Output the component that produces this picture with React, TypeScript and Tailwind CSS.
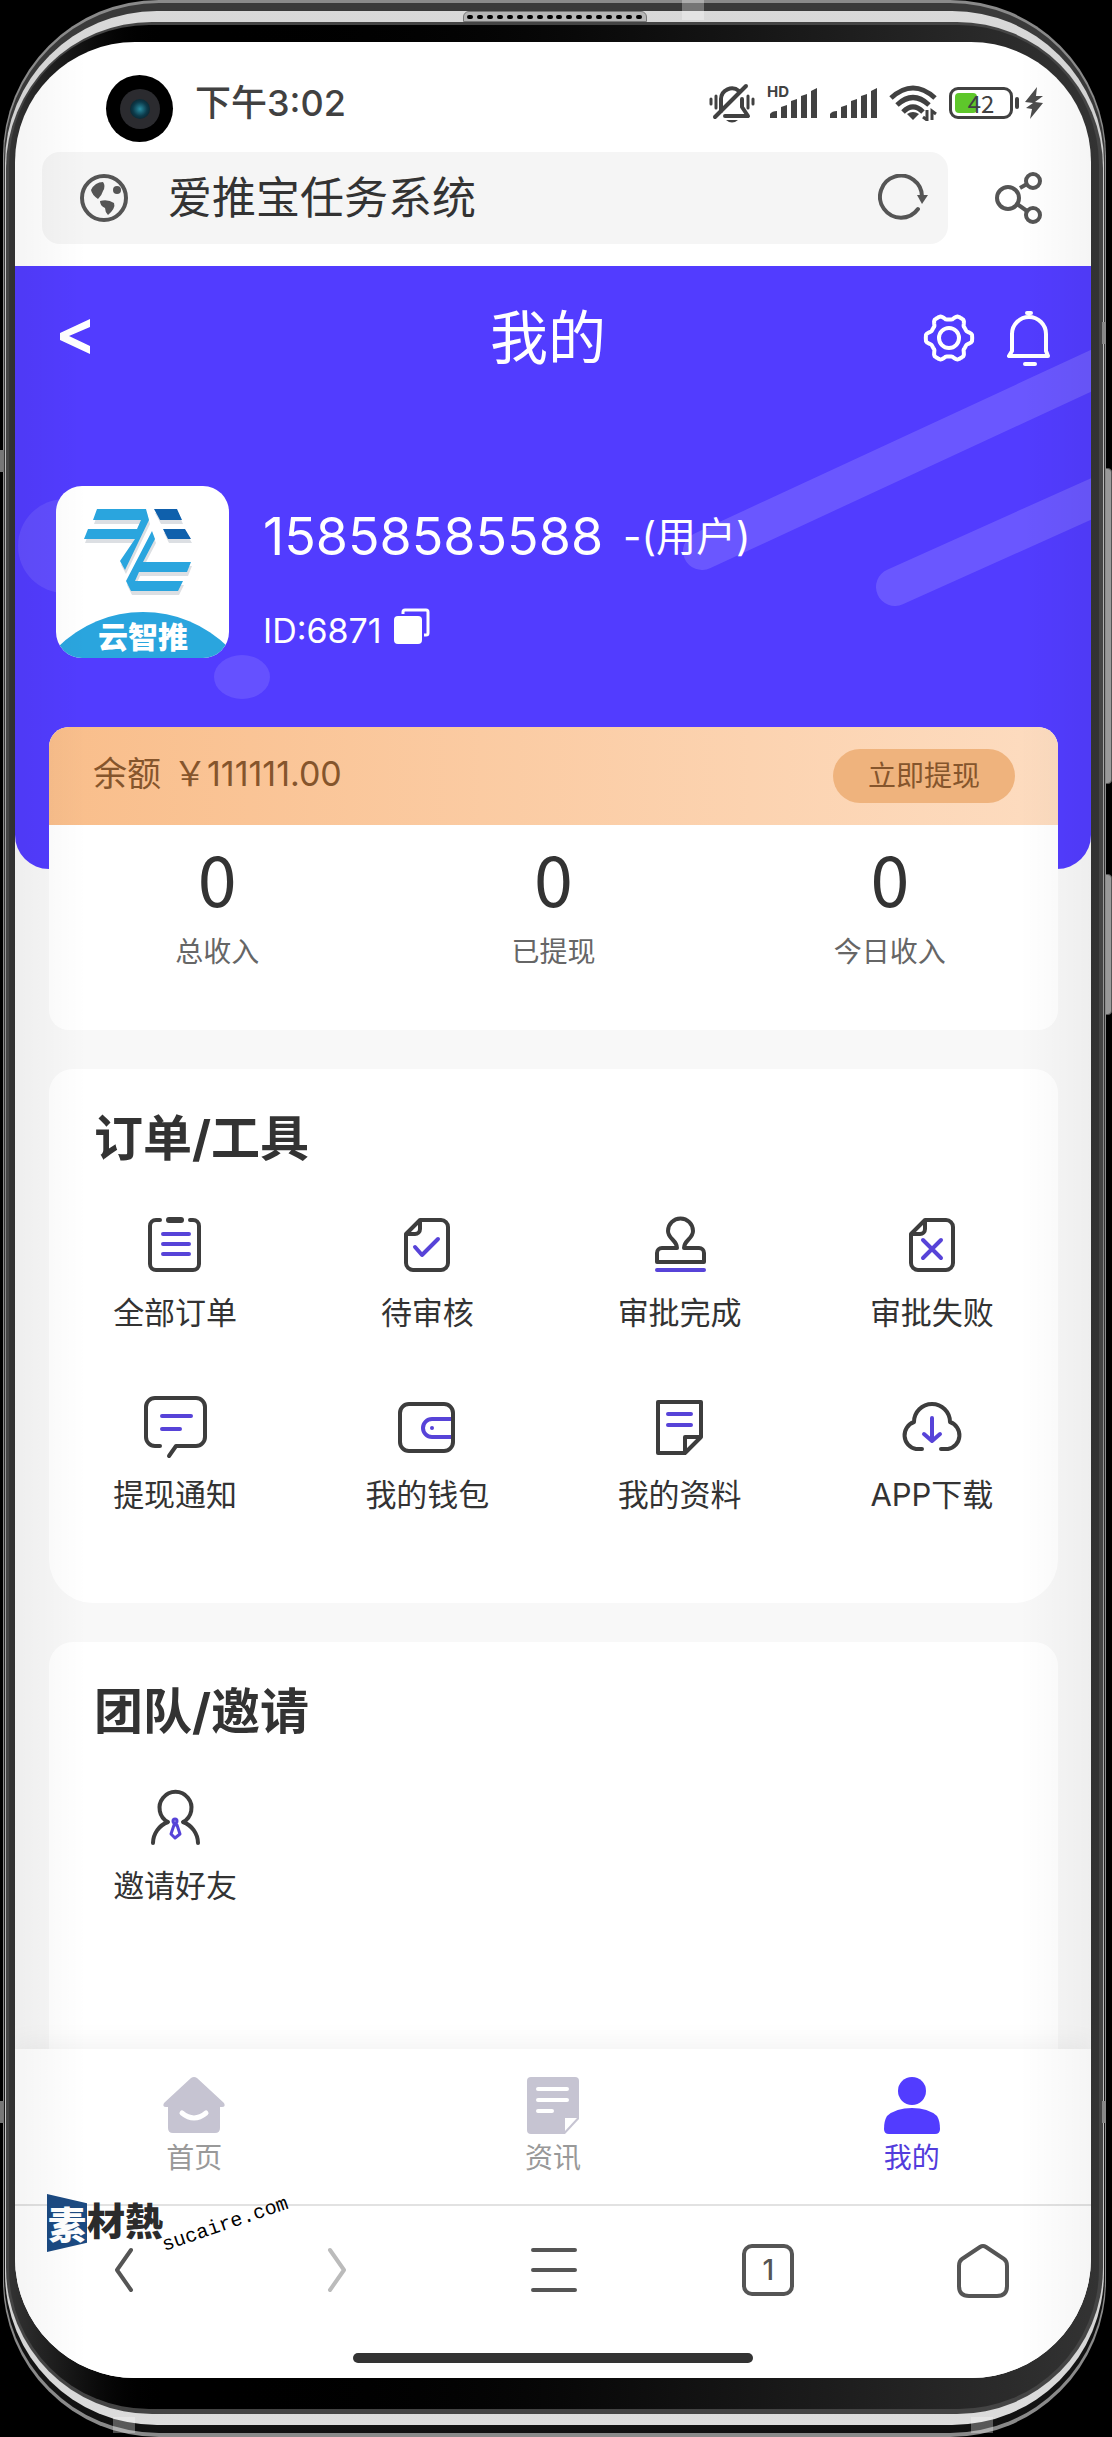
import type { ReactNode } from 'react';

const INK = '#3d3d3d';
const ACCENT = '#5743d8';

function ToolIcon({ children }: { children: ReactNode }) {
  return (
    <svg
      viewBox="0 0 64 64"
      className="h-16 w-16 overflow-visible"
      fill="none"
      stroke={INK}
      strokeWidth="4"
      strokeLinecap="round"
      strokeLinejoin="round"
      aria-hidden
    >
      {children}
    </svg>
  );
}

const FilePath = () => (
  <path d="M25 6H46a7 7 0 0 1 7 7V49a7 7 0 0 1-7 7H18a7 7 0 0 1-7-7V20L25 6V15a5 5 0 0 1-5 5H11" />
);

const ORDER_TOOLS = [
  {
    label: '全部订单',
    icon: (
      <ToolIcon>
        <path d="M17 6H13a6 6 0 0 0-6 6V50a6 6 0 0 0 6 6H50a6 6 0 0 0 6-6V12a6 6 0 0 0-6-6H47" />
        <rect x="23" y="3" width="18" height="6" rx="3" fill={INK} stroke="none" />
        <path stroke={ACCENT} d="M20 20H46M20 30H46M20 40H46" />
      </ToolIcon>
    ),
  },
  {
    label: '待审核',
    icon: (
      <ToolIcon>
        <FilePath />
        <path stroke={ACCENT} d="M20 33L27 41L43 25" />
      </ToolIcon>
    ),
  },
  {
    label: '审批完成',
    icon: (
      <ToolIcon>
        <path d="M29 34C29 26 20 25 20 17a12 12 0 0 1 25 0C45 25 36 26 36 34H51a5 5 0 0 1 5 5V48H9V39a5 5 0 0 1 5-5Z" />
        <path stroke={ACCENT} d="M9 56H56" />
      </ToolIcon>
    ),
  },
  {
    label: '审批失败',
    icon: (
      <ToolIcon>
        <FilePath />
        <path stroke={ACCENT} d="M23 26L41 44M41 26L23 44" />
      </ToolIcon>
    ),
  },
  {
    label: '提现通知',
    icon: (
      <ToolIcon>
        <path d="M17 50H12a9 9 0 0 1-9-9V11a9 9 0 0 1 9-9H53a9 9 0 0 1 9 9V41a9 9 0 0 1-9 9H33L26 60" />
        <path stroke={ACCENT} d="M19 20H48M19 33H37" />
      </ToolIcon>
    ),
  },
  {
    label: '我的钱包',
    icon: (
      <ToolIcon>
        <path stroke={ACCENT} d="M57 23H37a9 9 0 0 0 0 18H57" />
        <circle cx="37" cy="32" r="2" fill={ACCENT} stroke="none" />
        <rect x="5" y="8" width="53" height="47" rx="9" />
      </ToolIcon>
    ),
  },
  {
    label: '我的资料',
    icon: (
      <ToolIcon>
        <path d="M10 6H53V41L37 57H10ZM37 57V41H53" />
        <path stroke={ACCENT} d="M20 18H43M20 29H43" />
      </ToolIcon>
    ),
  },
  {
    label: 'APP下载',
    icon: (
      <ToolIcon>
        <path d="M22 53H16a14 14 0 0 1-2-27a18 18 0 0 1 36 0a14 14 0 0 1-2 27H41" />
        <path stroke={ACCENT} d="M32 22V45M24 38L32 45L40 38" />
      </ToolIcon>
    ),
  },
];

const TEAM_TOOLS = [
  {
    label: '邀请好友',
    icon: (
      <ToolIcon>
        <path d="M10 56a23 23 0 0 1 15-21a16 16 0 1 1 15 0a23 23 0 0 1 15 21" />
        <g stroke={ACCENT} strokeWidth="3">
          <circle cx="32" cy="34" r="2" />
          <path d="M31 38L28 47L32 51L37 47L34 38Z" />
        </g>
      </ToolIcon>
    ),
  },
];

const STATS = [
  { label: '总收入', value: 0 },
  { label: '已提现', value: 0 },
  { label: '今日收入', value: 0 },
];

const TABS = [
  {
    label: '首页',
    active: false,
    icon: (
      <>
        <path
          fill="#c6c4d2"
          d="M27 3Q30 1 33 3L60 28Q62 32 58 32H56V53Q56 58 51 58H9Q4 58 4 53V32H2Q-2 32 0 28Z"
        />
        <path d="M18 38Q30 48 42 38" fill="none" stroke="#fff" strokeWidth="5" strokeLinecap="round" />
      </>
    ),
  },
  {
    label: '资讯',
    active: false,
    icon: (
      <>
        <path fill="#c6c4d2" d="M8 2H52Q56 2 56 6V44L42 59H8Q4 59 4 55V6Q4 2 8 2Z" />
        <path d="M15 14H44M15 25H44M15 36H29" stroke="#fff" strokeWidth="4" strokeLinecap="round" />
        <path fill="#fff" d="M42 56V43H54Z" />
      </>
    ),
  },
  {
    label: '我的',
    active: true,
    icon: (
      <g fill="#523cff">
        <circle cx="30" cy="16" r="14" />
        <path d="M30 33Q46 33 55 41Q58 46 58 54Q58 59 53 59H7Q2 59 2 54Q2 46 5 41Q14 33 30 33Z" />
      </g>
    ),
  },
];

// Six-lobed outline for the settings gear
const gearPath =
  Array.from({ length: 90 }, (_, i) => {
    const a = (i * 4 * Math.PI) / 180;
    const r = 21 + Math.max(-2.4, Math.min(2.2, 4 * Math.cos(6 * a)));
    return `${i ? 'L' : 'M'}${(26 + r * Math.cos(a)).toFixed(1)} ${(26 + r * Math.sin(a)).toFixed(1)}`;
  }).join('') + 'Z';

function SignalBars() {
  return (
    <g fill="#414141">
      <path d="M0 30V26Q2 23 7 23V30Z" />
      <path d="M11 30V19L17 17V30Z" />
      <path d="M21 30V13L27 11V30Z" />
      <path d="M31 30V8L37 6V30Z" />
      <path d="M41 30V3L47 0V30Z" />
    </g>
  );
}

function StatusBar() {
  return (
    <div className="flex h-[110px] items-center justify-between pt-3 pr-12 pl-[180px] text-[#414141]">
      <span className="text-[36px] font-medium leading-10">下午3:02</span>
      <div className="flex items-center gap-3">
        <svg viewBox="0 0 46 40" className="h-10 w-[46px]" fill="none" stroke="#414141" strokeWidth="4" strokeLinecap="round">
          <path d="M12 28V16a11 11 0 0 1 18-8M33 16V24L39 33H16" strokeLinejoin="round" />
          <path d="M37 3L6 34" />
          <path d="M17 37Q23 42 29 37Z" fill="#414141" stroke="none" />
          <path strokeWidth="3" d="M2 16V21M7 13V25M39 13V25M44 16V21" />
        </svg>
        <svg viewBox="0 0 51 32" className="h-8 w-[51px] overflow-visible">
          <text x="0" y="10" fontSize="15" fontWeight="700" fill="#414141">HD</text>
          <g transform="translate(3 1)"><SignalBars /></g>
        </svg>
        <svg viewBox="0 0 47 32" className="h-8 w-[47px]">
          <g transform="translate(0 1)"><SignalBars /></g>
        </svg>
        <svg viewBox="0 0 48 36" className="h-9 w-12" fill="none" stroke="#414141" strokeWidth="5">
          <path d="M2 13Q24 -7 46 13" />
          <path d="M8 20Q24 5 40 20" />
          <path d="M14 27Q24 17 34 27" />
          <path d="M24 35L18 29Q24 25 30 29Z" fill="#414141" stroke="none" />
          <path strokeWidth="3" d="M38 25V35L34 32M43 35V26L47 29" />
        </svg>
        <div className="flex items-center gap-[2px]">
          <div className="relative h-8 w-16 rounded-[9px] border-[3px] border-[#414141]">
            <div className="absolute inset-y-[3px] left-[3px] w-[22px] rounded-[4px] bg-[#5ec72b]" />
            <span className="absolute inset-0 text-center font-['Noto_Sans_CJK_SC'] text-[24px] leading-[26px]">42</span>
          </div>
          <div className="h-3 w-1 rounded-full bg-[#414141]" />
          <svg viewBox="0 0 18 32" className="ml-1 h-8 w-[18px]">
            <path fill="#4c4c4c" d="M12 0L0 15L8 16L1 21L7 22L5 32L18 16L10 15L18 9L11 9Z" />
          </svg>
        </div>
      </div>
    </div>
  );
}

function AddressBar() {
  return (
    <div className="flex items-center gap-[47px] pr-12 pb-[22px] pl-[27px]">
      <div className="flex h-[92px] flex-1 items-center rounded-[18px] bg-[#f5f5f5] pr-5 pl-[38px]">
        <svg viewBox="0 0 48 48" className="h-12 w-12">
          <circle cx="24" cy="24" r="22" fill="none" stroke="#555" strokeWidth="4" />
          <path
            fill="#555"
            d="M11 16Q15 8 23 8Q26 12 23 17Q22 21 18 25Q12 21 11 16ZM20 27Q28 25 34 29Q36 34 28 41Q25 38 25 34Q20 32 20 27Z"
          />
          <circle cx="37" cy="16" r="4" fill="#555" />
        </svg>
        <span className="ml-10 flex-1 text-[44px] leading-[56px] text-[#333]">爱推宝任务系统</span>
        <button type="button" aria-label="刷新">
          <svg viewBox="0 0 50 48" className="h-12 w-[50px]">
            <path d="M40 35A21 21 0 1 1 44 23" fill="none" stroke="#555" strokeWidth="4" strokeLinecap="round" />
            <path d="M39 21H50L44 30Z" fill="#555" />
          </svg>
        </button>
      </div>
      <button type="button" aria-label="分享">
        <svg viewBox="0 0 48 52" className="h-[52px] w-12" fill="none" stroke="#555" strokeWidth="4">
          <circle cx="13" cy="26" r="11" />
          <circle cx="38" cy="9" r="7" />
          <circle cx="38" cy="43" r="7" />
          <path d="M25 16L32 12M22 32L32 39" />
        </svg>
      </button>
    </div>
  );
}

function Avatar() {
  return (
    <svg viewBox="0 0 173 172" className="h-[172px] w-[173px] rounded-[26px] bg-white" role="img" aria-label="云智推">
      <g fill="#dcdfe3" transform="translate(1 4)">
        <path d="M41 23H90L93 34L69 84L64 75L79 53H28L32 43H81L85 34H37Z" />
        <path d="M96 45L99 53L87 76H135L131 86H83L79 95H127L122 105H75L70 95Z" />
        <path d="M98 23H121L126 34H104ZM107 43H129L135 53H112Z" />
      </g>
      <g fill="#2aa5de">
        <path d="M41 23H90L93 34L69 84L64 75L79 53H28L32 43H81L85 34H37Z" />
        <path d="M96 45L99 53L87 76H135L131 86H83L79 95H127L122 105H75L70 95Z" />
        <circle cx="87" cy="247" r="121" />
      </g>
      <path fill="#0f60ac" d="M98 23H121L126 34H104ZM107 43H129L135 53H112Z" />
      <text x="87" y="162" fontSize="30" fontWeight="900" fill="#fff" textAnchor="middle">云智推</text>
    </svg>
  );
}

function ProfileHeader() {
  return (
    <header className="relative overflow-hidden rounded-b-[34px] bg-[#523cff] pb-[211px] text-white">
      <svg viewBox="0 0 1076 603" className="absolute inset-0 h-full w-full" fill="#fff" fillOpacity="0.13" aria-hidden>
        <path d="M687 285L1082 102M880 321L1096 224" stroke="#fff" strokeOpacity="0.14" strokeWidth="38" strokeLinecap="round" />
        <circle cx="50" cy="280" r="47" fillOpacity="0.09" />
        <ellipse cx="227" cy="411" rx="28" ry="22" fillOpacity="0.11" />
      </svg>
      <div className="relative grid h-36 grid-cols-3 items-center pr-10 pl-[42px]">
        <button type="button" aria-label="返回" className="justify-self-start">
          <svg viewBox="0 0 36 40" className="h-10 w-9">
            <path fill="#fff" d="M33 1V9L12 18L33 28V36L3 22V15Z" />
          </svg>
        </button>
        <h1 className="pr-3 text-center text-[58px] leading-[72px]">我的</h1>
        <div className="flex items-center gap-8 justify-self-end">
          <button type="button" aria-label="设置">
            <svg viewBox="0 0 52 52" className="h-[52px] w-[52px]" fill="none" stroke="#fff" strokeWidth="4" strokeLinejoin="round">
              <path d={gearPath} />
              <circle cx="26" cy="26" r="10" />
            </svg>
          </button>
          <button type="button" aria-label="通知">
            <svg viewBox="0 0 44 56" className="h-14 w-11" fill="none" stroke="#fff" strokeWidth="4" strokeLinecap="round" strokeLinejoin="round">
              <path d="M22 7a17 17 0 0 0-17 17V41L2 46H41L39 41V24a17 17 0 0 0-17-17Z" />
              <path d="M20 3H24M18 54H28" />
            </svg>
          </button>
        </div>
      </div>
      <div className="relative mt-[76px] flex gap-[34px] pl-[41px]">
        <Avatar />
        <div className="flex flex-col pt-[19px]">
          <p className="flex items-center gap-5 leading-16">
            <span className="text-[52px]">15858585588</span>
            <span className="text-[40px]">-(用户)</span>
          </p>
          <div className="mt-[38px] flex items-center gap-3 text-[34px] leading-12">
            <span>ID:6871</span>
            <button type="button" aria-label="复制ID" className="pb-2">
              <svg viewBox="0 0 36 38" className="h-[38px] w-9">
                <rect y="8" width="28" height="28" rx="4" fill="#fff" />
                <path d="M9 6V4Q9 2 11 2H32Q34 2 34 4V25Q34 27 32 27H30" fill="none" stroke="#fff" strokeWidth="3" />
              </svg>
            </button>
          </div>
        </div>
      </div>
    </header>
  );
}

function BalanceCard() {
  return (
    <section className="relative -mt-[142px] overflow-hidden rounded-[20px] bg-white">
      <div className="flex h-[98px] items-center justify-between bg-linear-to-r from-[#f9be8b] to-[#fddcc0] pr-[43px] pl-11 text-[#85552c]">
        <p className="flex items-center gap-3 pb-1 text-[34px] leading-12">
          <span>余额</span>
          <span>￥111111.00</span>
        </p>
        <button type="button" className="h-[54px] w-[182px] rounded-full bg-[#efb37d] text-[28px]">
          立即提现
        </button>
      </div>
      <dl className="grid grid-cols-3 pt-5 pb-[60px] text-center">
        {STATS.map((stat) => (
          <div key={stat.label} className="flex flex-col-reverse gap-[25px]">
            <dt className="text-[28px] leading-9 text-[#666]">{stat.label}</dt>
            <dd className="font-['Noto_Sans_CJK_SC'] text-[70px] leading-16 text-[#333]">{stat.value}</dd>
          </div>
        ))}
      </dl>
    </section>
  );
}

function ToolCard({ title, tools, className }: { title: string; tools: typeof ORDER_TOOLS; className: string }) {
  return (
    <section className={`mt-[39px] bg-white pt-[42px] text-[#333] ${className}`}>
      <h2 className="pl-[45px] text-[49px] font-bold leading-14">{title}</h2>
      <div className="mt-[47px] grid grid-cols-4 gap-y-[63px]">
        {tools.map((tool) => (
          <a key={tool.label} href="#" className="flex flex-col items-center gap-[15px]">
            {tool.icon}
            <span className="text-[31px] leading-10">{tool.label}</span>
          </a>
        ))}
      </div>
    </section>
  );
}

function TabBar() {
  return (
    <nav className="relative grid grid-cols-3 bg-white pt-[26px] pb-7 shadow-[0_-6px_24px_rgba(0,0,0,0.05)]">
      {TABS.map((tab) => (
        <a
          key={tab.label}
          href="#"
          className={`flex flex-col items-center gap-[5px] text-[28px] leading-9 ${tab.active ? 'text-[#523cdc]' : 'text-[#999]'}`}
        >
          <svg viewBox="0 0 60 60" className="h-[60px] w-[60px] overflow-visible" aria-hidden>
            {tab.icon}
          </svg>
          {tab.label}
        </a>
      ))}
    </nav>
  );
}

function BrowserBar() {
  return (
    <div className="relative border-t-2 border-[#e2e2e2] bg-white pt-9 pb-[15px]">
      <div className="grid grid-cols-5 justify-items-center">
        {[
          { label: '后退', path: 'M36 8L22 28L36 48', color: '#555' },
          { label: '前进', path: 'M20 8L34 28L20 48', color: '#bbb' },
          { label: '菜单', path: 'M8 8H50M8 28H50M8 48H50', color: '#555' },
        ].map((item) => (
          <button key={item.label} type="button" aria-label={item.label}>
            <svg viewBox="0 0 56 56" className="h-14 w-14" fill="none" stroke={item.color} strokeWidth="4" strokeLinecap="round" strokeLinejoin="round">
              <path d={item.path} />
            </svg>
          </button>
        ))}
        <button
          type="button"
          aria-label="标签页"
          className="my-[2px] h-[52px] w-[52px] rounded-[10px] border-4 border-[#555] text-[28px] font-medium leading-[44px] text-[#555]"
        >
          1
        </button>
        <button type="button" aria-label="主页">
          <svg viewBox="0 0 56 56" className="h-14 w-14" fill="none" stroke="#555" strokeWidth="4" strokeLinejoin="round">
            <path d="M25 5Q28 3 31 5L49 17Q52 19 52 24V44Q52 54 42 54H14Q4 54 4 44V24Q4 19 7 17Z" />
          </svg>
        </button>
      </div>
      <div className="mx-auto mt-[55px] h-[10px] w-[400px] rounded-full bg-[#333]" />
      <div className="absolute -top-3 left-8 flex items-center font-['Noto_Sans_CJK_TC'] text-[38px] font-black leading-[58px] text-[#2b2b2b]">
        <span className="bg-[#1b4a82] px-px text-white [clip-path:polygon(0_0,100%_16%,100%_84%,0_100%)]">素</span>
        <span className="-mt-2">材熱</span>
      </div>
      <span className="absolute -top-1 left-[143px] origin-center -rotate-[19deg] pt-2 font-['Liberation_Mono'] text-[20px] text-black">
        sucaire.com
      </span>
    </div>
  );
}

function Phone({ children }: { children: ReactNode }) {
  return (
    <div className="relative mr-[6px] ml-[3px]">
      <div className="absolute top-[468px] -right-[6px] h-[316px] w-2 rounded-r-[4px] border border-[#555] bg-[#999]" />
      <div className="absolute top-[874px] -right-[6px] h-[141px] w-2 rounded-r-[4px] border border-[#555] bg-[#999]" />
      <div className="relative rounded-[156px] bg-[#8a8a8a] px-px pt-[3px] pb-1">
        <div className="rounded-[155px] bg-linear-to-b from-[#3a3a3a] via-[#333] to-[#111] px-px py-2">
          <div className="rounded-[152px] bg-linear-to-b from-[#d9d9d9] via-[#858585] to-[#dcdcdc] px-px py-[11px]">
            <div className="rounded-[146px] bg-[#444] pt-[3px] pr-1 pb-[5px] pl-[3px]">
              <div className="rounded-[140px] bg-linear-to-r from-[#333] via-black via-15% to-[#333] pt-[17px] pr-2 pb-[31px] pl-[6px]">
                <div className="relative overflow-hidden rounded-[120px] bg-white">{children}</div>
              </div>
            </div>
          </div>
        </div>
      </div>
      {/* earpiece */}
      <div className="absolute top-[11px] left-1/2 flex h-[11px] w-[184px] -translate-x-1/2 items-center justify-evenly rounded-t-[6px] border border-[#777] bg-[#b5b5b5]">
        {Array.from({ length: 18 }, (_, i) => (
          <span key={i} className="h-1 w-[6px] rounded-full bg-black" />
        ))}
      </div>
      {/* antenna bands */}
      <div className="absolute top-0 left-[679px] h-5 w-[22px] bg-white/30" />
      <div className="absolute bottom-1 left-[110px] h-4 w-[22px] bg-white/30" />
      <div className="absolute right-[113px] bottom-1 h-4 w-[22px] bg-white/30" />
      <div className="absolute top-[450px] -left-[3px] h-[22px] w-1 bg-[#777]" />
      <div className="absolute top-[2101px] -left-[3px] h-[22px] w-1 bg-[#777]" />
      <div className="absolute top-[322px] right-0 h-[22px] w-1 bg-[#888]" />
      <div className="absolute top-[2101px] right-0 h-[22px] w-1 bg-[#888]" />
    </div>
  );
}

export default function App() {
  return (
    <div className="min-h-screen bg-black font-['Inter','Noto_Sans_CJK_SC',sans-serif]">
      <Phone>
        <StatusBar />
        <div className="absolute top-[33px] left-[91px] flex h-[67px] w-[67px] items-center justify-center rounded-full bg-black">
          <div className="flex h-10 w-10 items-center justify-center rounded-full bg-[#2b2b2f]">
            <div className="h-5 w-5 rounded-full bg-radial from-[#2b8fa3] via-[#0c3a4a] to-[#071319]" />
          </div>
        </div>
        <AddressBar />
        <main className="bg-[#f8f8f8]">
          <ProfileHeader />
          <div className="pr-[33px] pl-[34px]">
            <BalanceCard />
            <ToolCard title="订单/工具" tools={ORDER_TOOLS} className="rounded-t-[24px] rounded-b-[44px] pb-[88px]" />
            <ToolCard title="团队/邀请" tools={TEAM_TOOLS} className="rounded-t-[24px] pb-[143px]" />
          </div>
        </main>
        <TabBar />
        <BrowserBar />
        <div className="pointer-events-none absolute inset-y-0 left-0 w-[72px] bg-linear-to-r from-black/4 to-transparent" />
        <div className="pointer-events-none absolute inset-y-0 right-0 w-[72px] bg-linear-to-l from-black/4 to-transparent" />
      </Phone>
    </div>
  );
}
